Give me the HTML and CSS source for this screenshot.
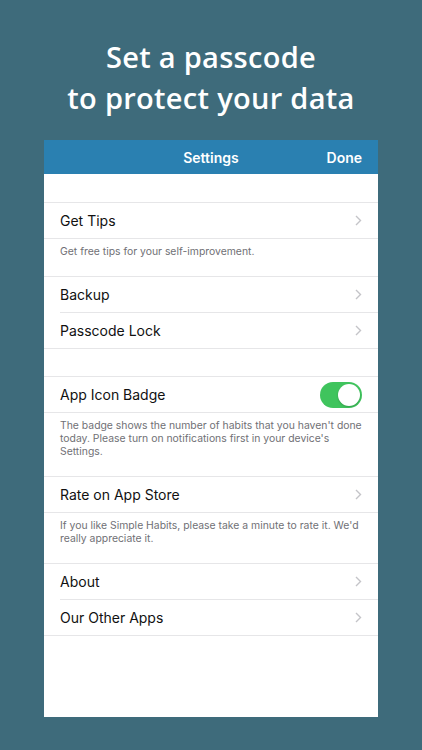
FILE: index.html
```html
<!DOCTYPE html>
<html>
<head>
<meta charset="utf-8">
<link rel="stylesheet" href="styles.css">
</head>
<body>
<div class="hero">
  <h1 class="title">Set a passcode<br>to protect your data</h1>
</div>
<div class="screen">
  <div class="navbar">
    <span class="nav-title">Settings</span>
    <span class="nav-done">Done</span>
  </div>
  <div class="spacer spacer-top"></div>
  <div class="group">
    <div class="row"><span>Get Tips</span><svg class="chev" viewBox="0 0 7 11"><path d="M1 1l4.5 4.5L1 10"/></svg></div>
  </div>
  <div class="footer">Get free tips for your self-improvement.</div>
  <div class="group">
    <div class="row"><span>Backup</span><svg class="chev" viewBox="0 0 7 11"><path d="M1 1l4.5 4.5L1 10"/></svg></div>
    <div class="row"><span>Passcode Lock</span><svg class="chev" viewBox="0 0 7 11"><path d="M1 1l4.5 4.5L1 10"/></svg></div>
  </div>
  <div class="spacer"></div>
  <div class="group">
    <div class="row"><span>App Icon Badge</span><span class="toggle"><span class="knob"></span></span></div>
  </div>
  <div class="footer">The badge shows the number of habits that you haven't done today. Please turn on notifications first in your device's Settings.</div>
  <div class="group">
    <div class="row"><span>Rate on App Store</span><svg class="chev" viewBox="0 0 7 11"><path d="M1 1l4.5 4.5L1 10"/></svg></div>
  </div>
  <div class="footer">If you like Simple Habits, please take a minute to rate it. We'd really appreciate it.</div>
  <div class="group">
    <div class="row"><span>About</span><svg class="chev" viewBox="0 0 7 11"><path d="M1 1l4.5 4.5L1 10"/></svg></div>
    <div class="row"><span>Our Other Apps</span><svg class="chev" viewBox="0 0 7 11"><path d="M1 1l4.5 4.5L1 10"/></svg></div>
  </div>
</div>
</body>
</html>
```

FILE: styles.css
```css
html, body {
  margin: 0;
  padding: 0;
}
body {
  background: #3e6b7b;
  width: 422px;
  height: 750px;
  overflow: hidden;
}
.hero {
  height: 140px;
  display: flex;
  align-items: center;
  justify-content: center;
}
.title {
  margin: 0;
  padding-top: 14px;
  font-family: "Open Sans", sans-serif;
  font-weight: 600;
  font-size: 29px;
  line-height: 41px;
  color: #ffffff;
  text-align: center;
  letter-spacing: 0.3px;
}
.screen {
  margin: 0 44px;
  width: 334px;
  height: 577px;
  background: #ffffff;
  font-family: Inter, "Liberation Sans", sans-serif;
}
.navbar {
  height: 34px;
  background: #2a80b1;
  display: flex;
  align-items: center;
  justify-content: center;
  position: relative;
  color: #ffffff;
  font-size: 14px;
  font-weight: 600;
}
.nav-done {
  position: absolute;
  right: 16px;
  top: 9px;
  font-size: 14px;
}
.spacer {
  height: 27px;
}
.spacer-top {
  height: 28px;
}
.group {
  border-top: 1px solid #e6e6e8;
  border-bottom: 1px solid #e6e6e8;
}
.row {
  height: 35px;
  margin-left: 16px;
  padding-right: 16px;
  display: flex;
  align-items: center;
  justify-content: space-between;
  font-size: 14px;
  color: #111111;
  border-bottom: 1px solid #e6e6e8;
}
.row:last-child {
  border-bottom: none;
}
.chev {
  width: 7px;
  height: 11px;
  fill: none;
  stroke: #c4c4c8;
  stroke-width: 1.4;
}
.footer {
  padding: 6px 10px 18px 16px;
  font-size: 10.4px;
  line-height: 13px;
  color: #707075;
}
.toggle {
  width: 42px;
  height: 26px;
  border-radius: 13px;
  background: #3fc45d;
  display: flex;
  align-items: center;
  justify-content: flex-end;
  padding: 0 2px;
  box-sizing: border-box;
}
.knob {
  width: 22px;
  height: 22px;
  border-radius: 50%;
  background: #ffffff;
  box-shadow: 0 1px 2px rgba(0,0,0,0.2);
}
```
